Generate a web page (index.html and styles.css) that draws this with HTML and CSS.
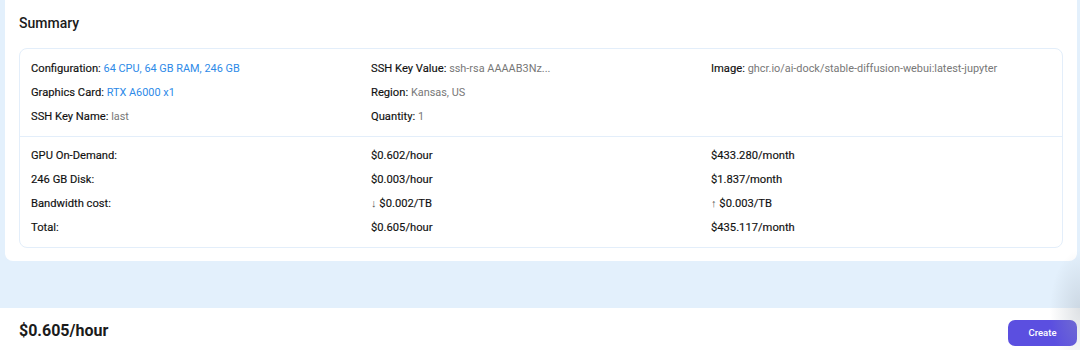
FILE: index.html
```html
<!DOCTYPE html>
<html>
<head>
<meta charset="utf-8">
<link rel="stylesheet" href="styles.css">
</head>
<body>
<div class="page">
  <section class="card">
    <h2 class="title">Summary</h2>
    <div class="box">
      <div class="grid info">
        <div class="cell"><span class="lbl">Configuration:</span> <span class="blue">64 CPU, 64 GB RAM, 246 GB</span></div>
        <div class="cell"><span class="lbl">SSH Key Value:</span> <span class="gray">ssh-rsa AAAAB3Nz...</span></div>
        <div class="cell"><span class="lbl">Image:</span> <span class="gray">ghcr.io/ai-dock/stable-diffusion-webui:latest-jupyter</span></div>
        <div class="cell"><span class="lbl">Graphics Card:</span> <span class="blue">RTX A6000 x1</span></div>
        <div class="cell"><span class="lbl">Region:</span> <span class="gray">Kansas, US</span></div>
        <div class="cell"></div>
        <div class="cell"><span class="lbl">SSH Key Name:</span> <span class="gray">last</span></div>
        <div class="cell"><span class="lbl">Quantity:</span> <span class="gray">1</span></div>
        <div class="cell"></div>
      </div>
      <div class="grid costs">
        <div class="cell">GPU On-Demand:</div>
        <div class="cell">$0.602/hour</div>
        <div class="cell">$433.280/month</div>
        <div class="cell">246 GB Disk:</div>
        <div class="cell">$0.003/hour</div>
        <div class="cell">$1.837/month</div>
        <div class="cell">Bandwidth cost:</div>
        <div class="cell"><span class="arrow">↓</span> $0.002/TB</div>
        <div class="cell"><span class="arrow">↑</span> $0.003/TB</div>
        <div class="cell">Total:</div>
        <div class="cell">$0.605/hour</div>
        <div class="cell">$435.117/month</div>
      </div>
    </div>
  </section>
  <footer class="footer">
    <div class="price">$0.605/hour</div>
    <button class="create">Create</button>
  </footer>
  <div class="glow"></div>
</div>
</body>
</html>
```

FILE: styles.css
```css
* { box-sizing: border-box; }
html, body {
  margin: 0;
  padding: 0;
  width: 1080px;
  height: 350px;
  overflow: hidden;
  background: #e3f0fc;
  font-family: Roboto, "Liberation Sans", Arial, sans-serif;
  color: #222;
}
.page {
  position: relative;
  width: 1080px;
  height: 350px;
  overflow: hidden;
  display: flex;
  flex-direction: column;
}
.card {
  margin: 0 3px 0 5px;
  background: #fff;
  border-radius: 0 0 8px 8px;
  padding: 14px 14px 15px 14px;
  height: 261px;
}
.title {
  margin: 0;
  font-size: 14px;
  font-weight: 500;
  line-height: 18px;
  color: #1b1b1b;
}
.box {
  margin-top: 16px;
  border: 1px solid #e3eefa;
  border-radius: 8px;
}
.grid {
  display: grid;
  grid-template-columns: 340px 340px 340px;
  padding: 0 11px;
}
.info {
  padding-top: 8px;
  padding-bottom: 7px;
  border-bottom: 1px solid #e3eefa;
}
.costs {
  padding-top: 7px;
  padding-bottom: 7px;
}
.cell {
  font-size: 11.2px;
  font-weight: 400;
  line-height: 24px;
  height: 24px;
  white-space: nowrap;
  color: #111;
  -webkit-text-stroke: 0.15px #111;
}
.lbl { color: #111; }
.blue { color: #2d8ae8; -webkit-text-stroke: 0; font-size: 10.9px; }
.gray { color: #777; -webkit-text-stroke: 0; font-size: 10.9px; }
.arrow { color: #555; -webkit-text-stroke: 0; }
.footer {
  margin-top: auto;
  height: 42px;
  background: #fff;
  display: flex;
  align-items: center;
  justify-content: space-between;
  padding: 0 3px 0 19px;
}
.price {
  font-size: 16px;
  font-weight: 700;
  color: #1b1b1b;
  padding-top: 2px;
}
.create {
  width: 69px;
  height: 26px;
  margin-top: 7px;
  border: none;
  border-radius: 7px;
  background: #5b4fe0;
  color: #fff;
  font-family: Roboto, "Liberation Sans", Arial, sans-serif;
  font-size: 9.5px;
  font-weight: 500;
}
.glow {
  position: absolute;
  right: -30px;
  bottom: -20px;
  width: 60px;
  height: 120px;
  border-radius: 50%;
  background: radial-gradient(closest-side, rgba(160,170,180,0.35), rgba(160,170,180,0));
  pointer-events: none;
}
```
